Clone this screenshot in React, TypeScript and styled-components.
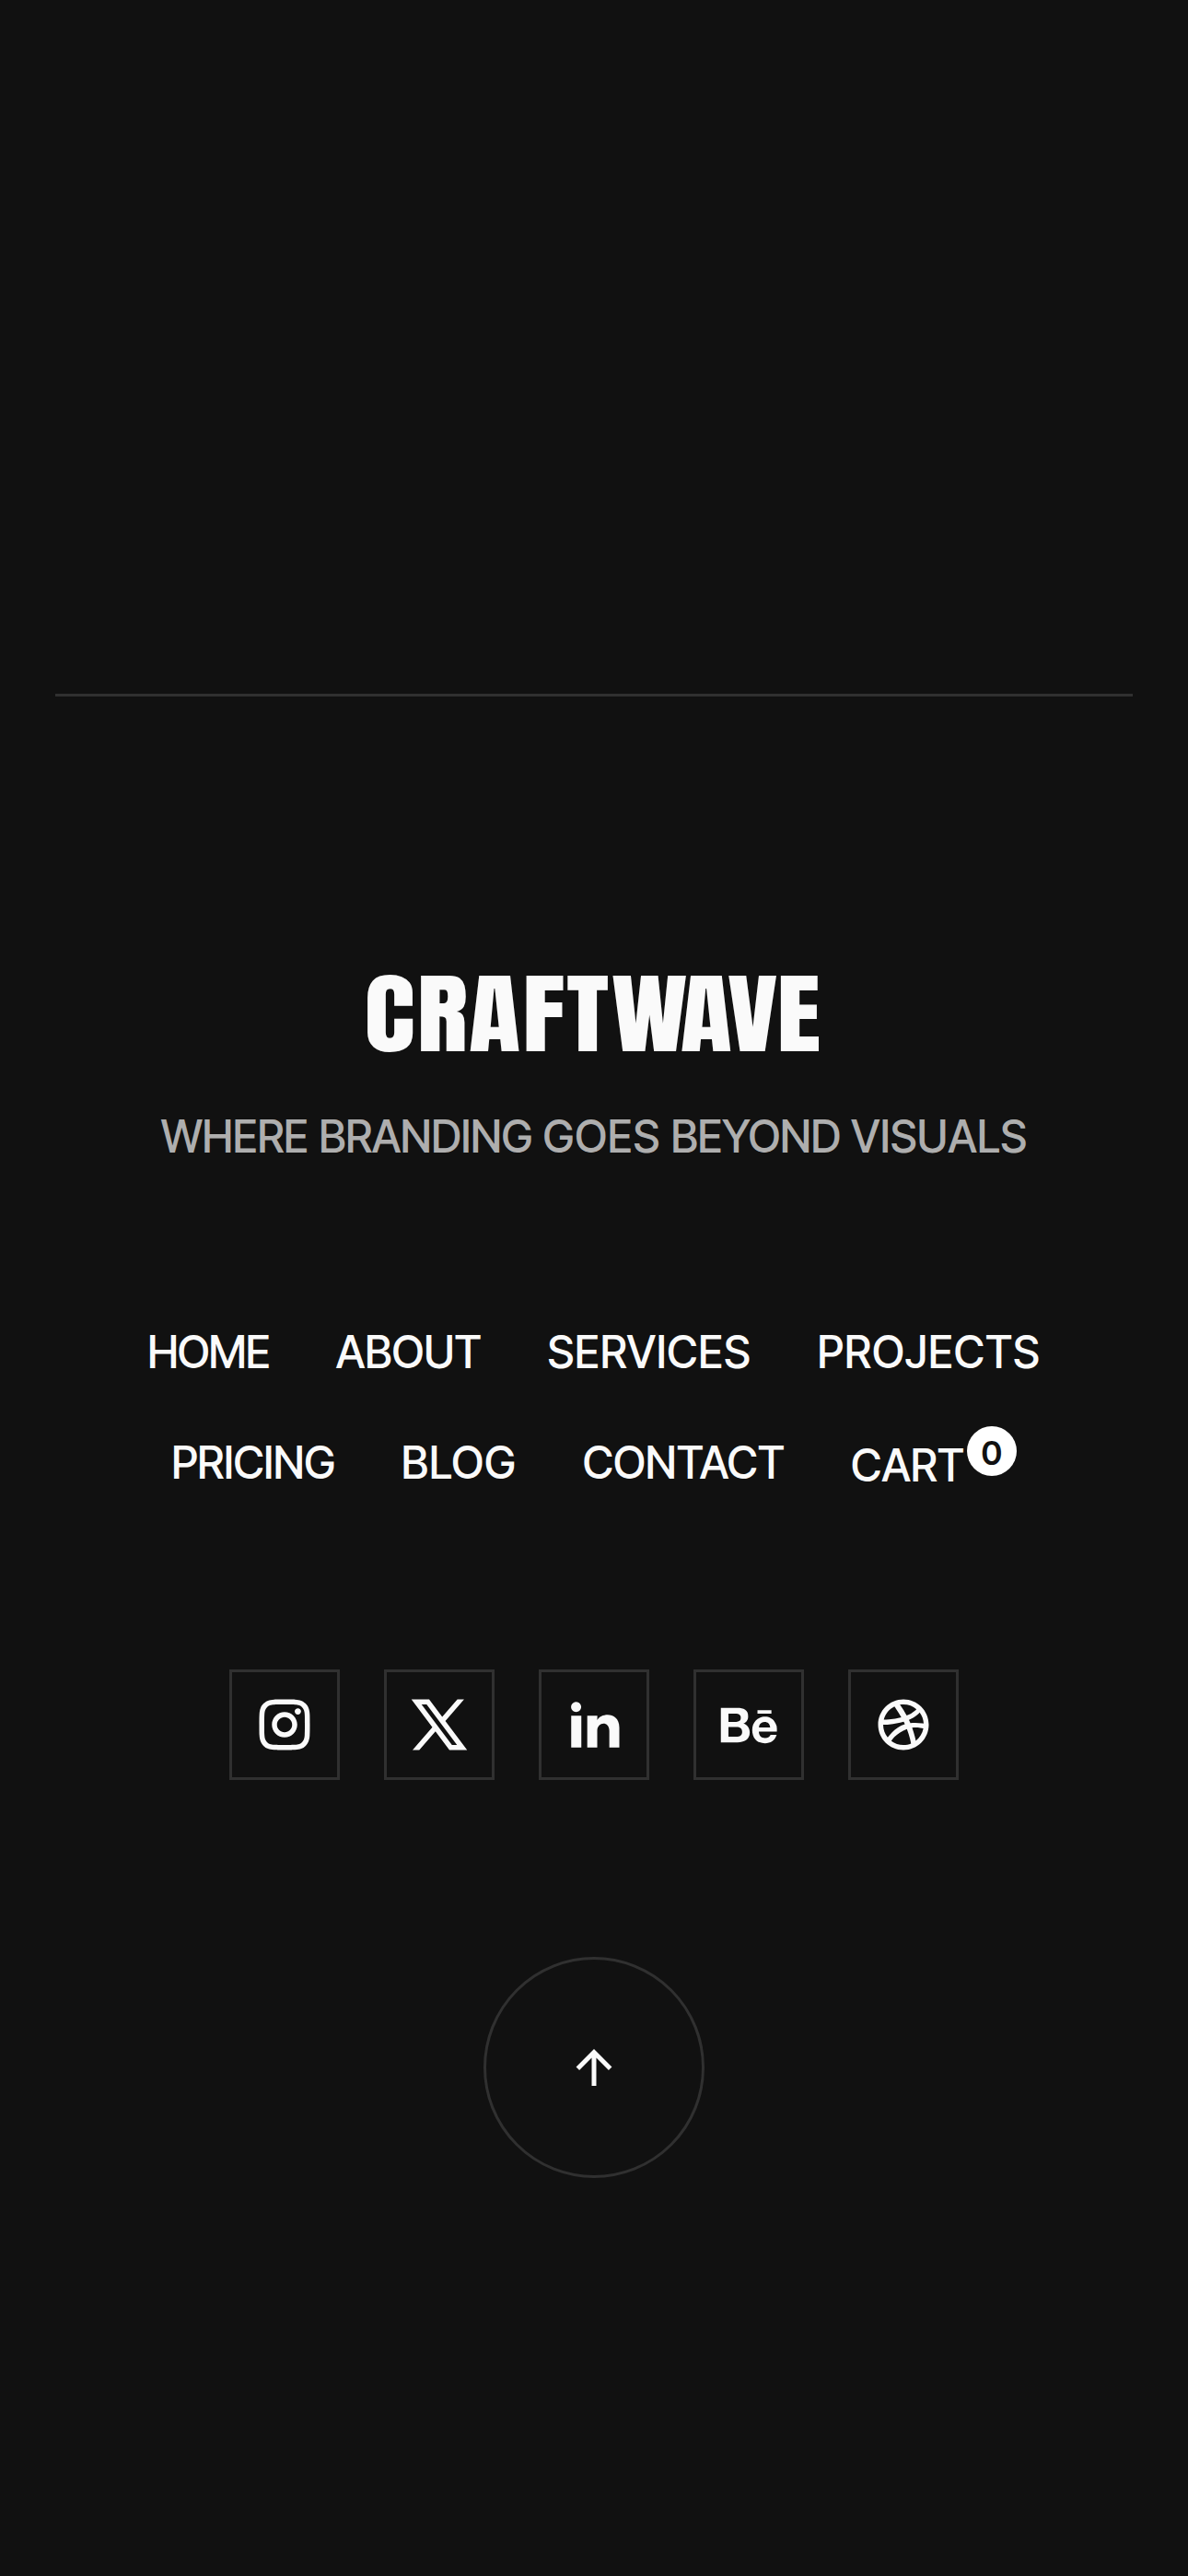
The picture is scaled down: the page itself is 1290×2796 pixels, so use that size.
import React from "react";
import styled, { createGlobalStyle } from "styled-components";
import {
  RiArrowUpLine,
  RiBehanceFill,
  RiDribbbleLine,
  RiInstagramLine,
  RiLinkedinFill,
} from "react-icons/ri";

const GlobalStyle = createGlobalStyle`
  *, *::before, *::after { box-sizing: border-box; }
  body {
    margin: 0;
    background: #111111;
    color: #fafafa;
    font-family: "Inter Tight", Inter, "Liberation Sans", sans-serif;
  }
`;

const Page = styled.div`
  min-height: 2796px;
  padding: 753px 60px 0;
  background: #111111;
  overflow: hidden;
`;

const Footer = styled.footer`
  display: flex;
  flex-direction: column;
  align-items: center;
  padding-top: 299px;
  border-top: 3px solid #303030;
`;

const Logo = styled.svg`
  display: block;
  width: 490px;
  height: 90px;
  overflow: visible;
`;

const Wordmark = styled.text`
  font-family: Anton, Inter, sans-serif;
  font-weight: 400;
  font-size: 96.4px;
  fill: #fafafa;
`;

const Word = styled.span<{ $tracking: number }>`
  letter-spacing: ${(p) => p.$tracking}px;
`;

const Tagline = styled.p`
  margin: 59px 0 0;
  font-size: 48px;
  font-weight: 500;
  line-height: 60px;
  word-spacing: 0.8px;
  color: #aeaeae;
  white-space: nowrap;
`;

const Nav = styled.nav`
  display: flex;
  flex-direction: column;
  align-items: center;
  gap: 60px;
  margin-top: 174px;
`;

const NavRow = styled.div`
  display: flex;
  gap: 72px;
  height: 60px;
`;

const NavLink = styled.a<{ $tracking: number }>`
  font-size: 48px;
  font-weight: 500;
  line-height: 60px;
  letter-spacing: ${(p) => p.$tracking}px;
  white-space: nowrap;
`;

const CartLink = styled(NavLink)`
  display: flex;
  padding-top: 3px;
`;

const CartCount = styled.span`
  width: 54px;
  height: 54px;
  margin: -13px 0 0 3px;
  border-radius: 50%;
  background: #ffffff;
  color: #111111;
  font-size: 36px;
  font-weight: 600;
  line-height: 58px;
  text-align: center;
`;

const Socials = styled.div`
  display: flex;
  gap: 48px;
  margin-top: 194px;
`;

const SocialLink = styled.a`
  display: flex;
  align-items: center;
  justify-content: center;
  width: 120px;
  height: 120px;
  border: 3px solid #303030;
  font-size: 66px;
`;

const BackToTop = styled.button`
  display: flex;
  align-items: center;
  justify-content: center;
  width: 240px;
  height: 240px;
  margin-top: 192px;
  padding: 0;
  border: 3px solid #303030;
  border-radius: 50%;
  background: transparent;
  color: #fafafa;
  font-size: 60px;
`;

const XLogo = () => (
  <svg width="1em" height="1em" viewBox="0 0 24 24" fill="currentColor">
    <path d="M8 2H1L9.26 13.01L1.45 22H4.1L10.49 14.65L16 22H23L14.39 10.52L21.8 2H19.15L13.16 8.88L8 2ZM17 20L5 4H7L19 20H17Z" />
  </svg>
);

const tagline: [string, number][] = [
  ["WHERE", -0.3],
  ["BRANDING", -0.4],
  ["GOES", 0.75],
  ["BEYOND", -0.45],
  ["VISUALS", 0.15],
];

const primary: [string, number][] = [
  ["HOME", -1],
  ["ABOUT", -0.1],
  ["SERVICES", 0.7],
  ["PROJECTS", 0.9],
];

const secondary: [string, number][] = [
  ["PRICING", -0.4],
  ["BLOG", 0.75],
  ["CONTACT", 0],
];

const socials = [
  { name: "Instagram", Icon: RiInstagramLine },
  { name: "X", Icon: XLogo },
  { name: "LinkedIn", Icon: RiLinkedinFill },
  { name: "Behance", Icon: RiBehanceFill },
  { name: "Dribbble", Icon: RiDribbbleLine },
];

export default function App() {
  return (
    <>
      <GlobalStyle />
      <Page>
        <Footer>
          <Logo viewBox="0 0 490 90">
            <Wordmark
              transform="translate(0 86.2) scale(1.2 1)"
              x="-3.8 44 90.8 139.3 179.4 220 282.3 325 369.6"
            >
              CRAFTWAVE
            </Wordmark>
          </Logo>
          <Tagline>
            {tagline.map(([text, tracking], i) => (
              <React.Fragment key={text}>
                {i > 0 && " "}
                <Word $tracking={tracking}>{text}</Word>
              </React.Fragment>
            ))}
          </Tagline>
          <Nav>
            <NavRow>
              {primary.map(([text, tracking]) => (
                <NavLink key={text} $tracking={tracking}>{text}</NavLink>
              ))}
            </NavRow>
            <NavRow>
              {secondary.map(([text, tracking]) => (
                <NavLink key={text} $tracking={tracking}>{text}</NavLink>
              ))}
              <CartLink $tracking={0}>
                CART<CartCount>0</CartCount>
              </CartLink>
            </NavRow>
          </Nav>
          <Socials>
            {socials.map(({ name, Icon }) => (
              <SocialLink key={name} aria-label={name}>
                <Icon />
              </SocialLink>
            ))}
          </Socials>
          <BackToTop aria-label="Back to top">
            <RiArrowUpLine />
          </BackToTop>
        </Footer>
      </Page>
    </>
  );
}
